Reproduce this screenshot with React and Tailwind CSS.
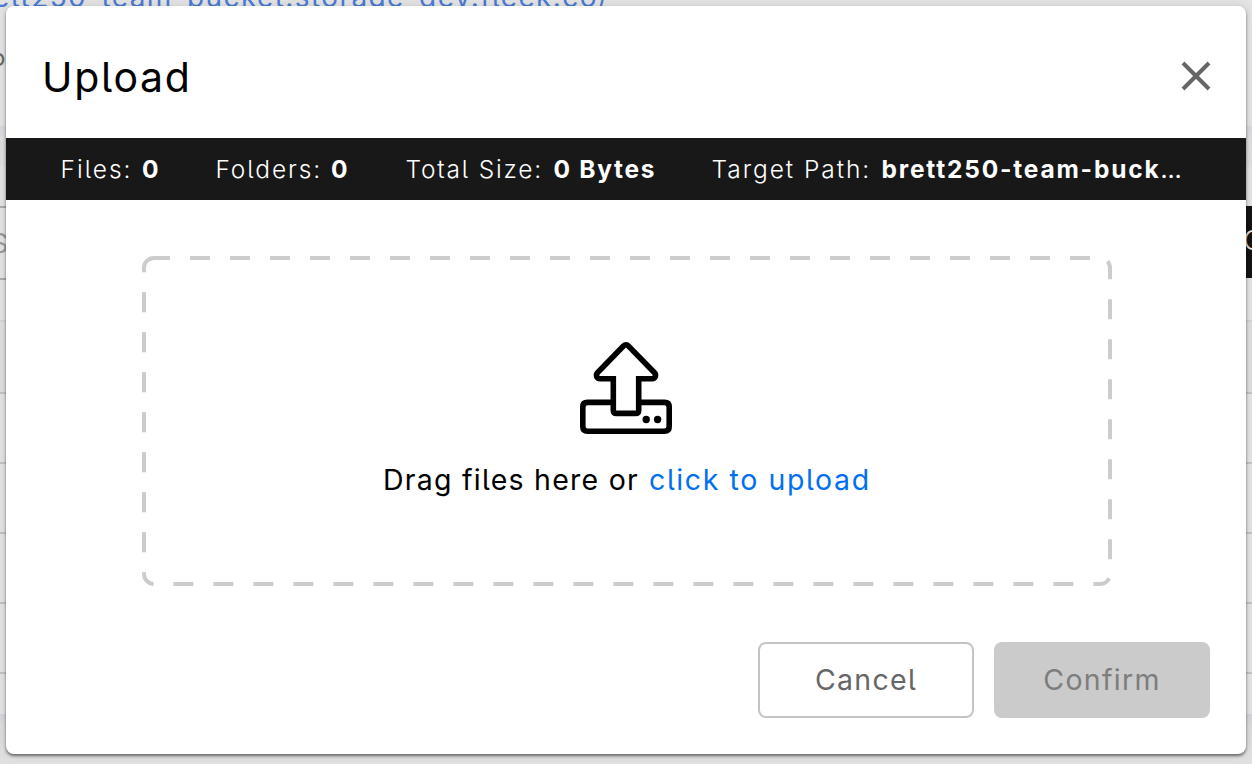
const stats = [
  { label: "Files:", value: "0", cell: "w-[155px]", labelStyle: "w-[81.5px] tracking-[2px]", valueStyle: "tracking-[1px]" },
  { label: "Folders:", value: "0", cell: "w-[190px]", labelStyle: "w-[115.5px] tracking-[1.9px]", valueStyle: "tracking-[1px]" },
  { label: "Total Size:", value: "0 Bytes", cell: "w-[306px]", labelStyle: "w-[148px] tracking-[1.8px]", valueStyle: "tracking-[1.7px]" },
  { label: "Target Path:", value: "brett250-team-buck", cell: "w-[480px]", labelStyle: "w-[170px] tracking-[1.95px]", valueStyle: "tracking-[1.8px]", more: true },
];

function Backdrop() {
  return (
    <div className="flex h-[764px] flex-col overflow-hidden bg-[#e3e3e3] whitespace-nowrap">
      <div className="h-[126px] shrink-0">
        <div className="-ml-[7px] h-[50px] text-[28px] leading-[30px] tracking-[1.4px] text-[#4a7ad6]">
          <div className="-mt-[18px]">ett250-team-bucket.storage-dev.fleek.co/</div>
        </div>
        <div className="-ml-[9px] mt-[14px] text-[24px] leading-[24px] text-[#666]">o</div>
      </div>
      <div className="h-[40px] shrink-0 bg-linear-to-b from-[#d5d9de] via-[#dedede] via-30% to-[#dfdfdf]" />
      <div className="h-[40px] shrink-0" />
      <div className="flex h-[74px] shrink-0 justify-between">
        <div className="w-[626px] border-y-2 border-[#ababab] text-[27px] leading-[72px] text-[#9a9a9a]">
          <span className="-ml-[9px]">S</span>
        </div>
        <div className="h-[72px] w-[10px] bg-[#151412] text-[27px] leading-[70px] font-light text-[#e2e2e2]">
          <span className="ml-[1px]">C</span>
        </div>
      </div>
      <div className="h-[42px] shrink-0 border-b-2 border-[#d4d4d4]" />
      <div className="h-[72px] shrink-0 border-b-2 border-[#c4c4c4] bg-[#dedede]" />
      <div className="h-[70px] shrink-0 border-b-2 border-[#c4c4c4]" />
      <div className="h-[70px] shrink-0 border-b-2 border-[#c4c4c4]" />
      <div className="h-[70px] shrink-0 border-b-2 border-[#c4c4c4]" />
      <div className="h-[70px] shrink-0 border-b-2 border-[#c4c4c4]" />
      <div className="h-[40px] shrink-0" />
      <div className="h-[50px] shrink-0 bg-linear-to-b from-[#d0d4da] via-[#dcdcdc] via-25% to-[#e0e0e0]" />
    </div>
  );
}

function UploadIcon() {
  return (
    <svg width="92" height="92" viewBox="580 342 92 92" fill="none" stroke="#000" strokeWidth="5.6" strokeLinejoin="round">
      <path d="M611.5 402.4H587.5Q582.8 402.4 582.8 407V426.500Q582.8 431.200 587.5 431.200H664.500Q669.200 431.200 669.200 426.500V407Q669.200 402.400 664.500 402.400H640.500" />
      <path strokeLinejoin="miter" d="M613.300 378.800H600C596.600 378.800 595.300 374.900 597.700 372.500L623.200 346.300Q626 343.300 628.800 346.300L654.300 372.500C656.700 374.900 655.400 378.800 652 378.800H638.700V410.200Q638.700 413.400 635.500 413.400H616.500Q613.300 413.400 613.300 410.200Z" />
      <g fill="#000" stroke="none">
        <circle cx="646.200" cy="419.500" r="3.700" />
        <circle cx="657.600" cy="419.500" r="3.700" />
      </g>
    </svg>
  );
}

function DropZone() {
  return (
    <div className="mt-[56px] ml-[136px] grid h-[330px] w-[970px] overflow-hidden rounded-[12px] [grid-template-areas:'stack']">
      <svg className="[grid-area:stack]" width="970" height="330" fill="none" stroke="#ccc" strokeWidth="8">
        <rect width="970" height="330" rx="12" strokeDasharray="20 20" strokeDashoffset="4" />
        <path d="M7 1.1A12 12 0 0 1 12.500 0" />
      </svg>
      <div className="flex flex-col items-center pt-[86px] pr-[2px] [grid-area:stack]">
        <UploadIcon />
        <p className="mt-[28px] flex w-[486px] text-[28.5px] leading-9 whitespace-nowrap">
          <span className="w-[266px] shrink-0 tracking-[1.25px]">Drag files here or</span>
          <span className="tracking-[1.6px] text-[#0070f3]">click to upload</span>
        </p>
      </div>
    </div>
  );
}

function Dialog() {
  return (
    <div role="dialog" className="absolute top-[6px] left-[6px] flex h-[748px] w-[1240px] flex-col rounded-[8px] bg-white shadow-[0_2px_3px_rgba(0,0,0,0.5),0_0_10px_rgba(0,0,0,0.1)]">
      <header className="flex h-[132px] shrink-0 items-center justify-between pr-[35px] pl-[36px]">
        <h2 className="mt-[9px] text-[41px] leading-[48px] tracking-[1.7px]">Upload</h2>
        <button className="mt-[8px]" aria-label="Close">
          <svg width="30" height="30" viewBox="0 0 30 30" stroke="#666" strokeWidth="4">
            <path d="M2 2L28 28M28 2L2 28" />
          </svg>
        </button>
      </header>
      <div className="flex h-[62px] shrink-0 items-center bg-[#181818] pl-[54.5px] text-[24.5px] whitespace-nowrap text-white">
        {stats.map((s) => (
          <div key={s.label} className={`flex shrink-0 ${s.cell}`}>
            <span className={`shrink-0 font-[350] ${s.labelStyle}`}>{s.label}</span>
            <b className={`font-[650] ${s.valueStyle}`}>{s.value}</b>
            {s.more && <span className="tracking-[1px]">…</span>}
          </div>
        ))}
      </div>
      <DropZone />
      <footer className="mt-[56px] flex justify-end gap-5 pr-9 text-[28.500px] tracking-[1.3px]">
        <button className="h-[76px] w-[216px] rounded-[8px] border-2 border-[#c4c4c4] text-[#666]">Cancel</button>
        <button className="h-[76px] w-[216px] rounded-[8px] bg-[#cbcbcb] text-[#7d7d7d]">Confirm</button>
      </footer>
    </div>
  );
}

export default function App() {
  return (
    <main className="relative h-[764px] w-[1252px] overflow-hidden font-['Inter',sans-serif] text-black [font-feature-settings:'cv05']">
      <Backdrop />
      <Dialog />
    </main>
  );
}
